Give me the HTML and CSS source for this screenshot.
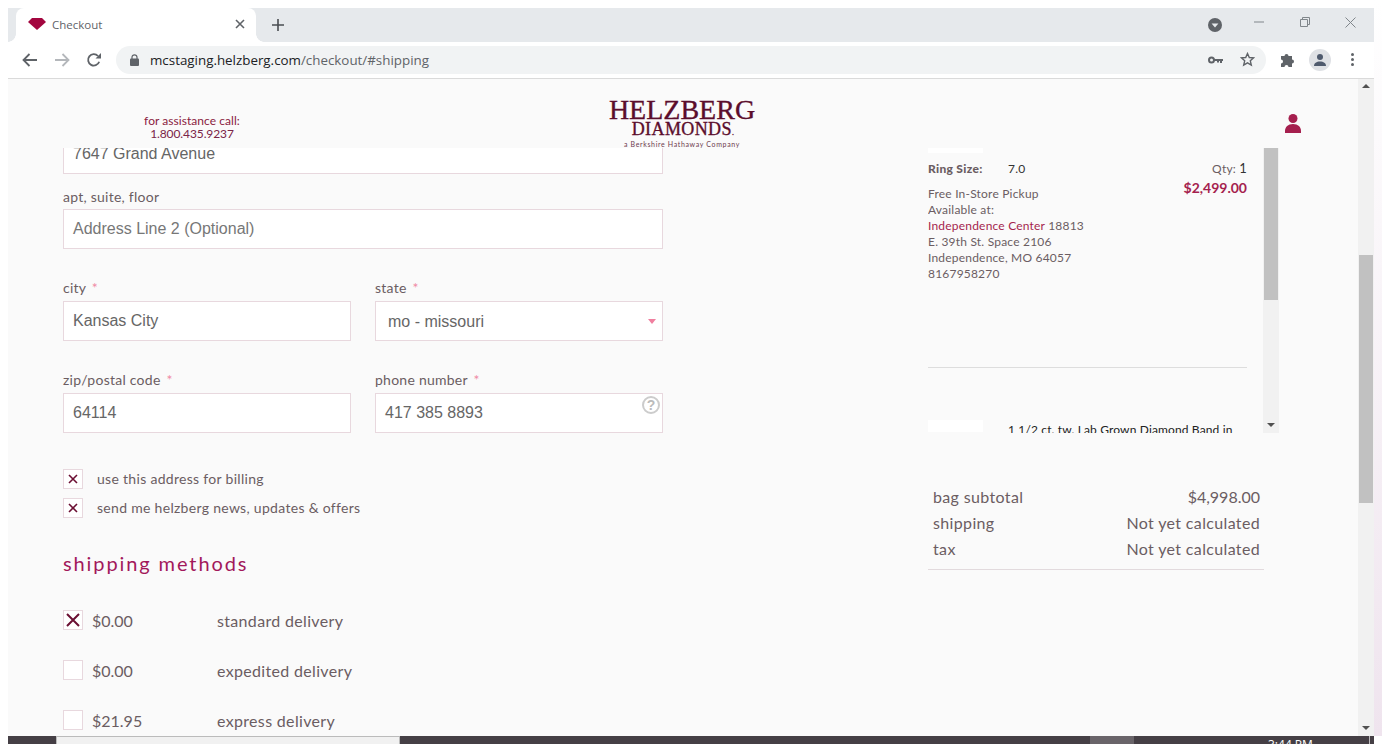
FILE: index.html
```html
<!DOCTYPE html>
<html lang="en">
<head>
  <meta charset="UTF-8">
  <title>Checkout</title>
  <link rel="stylesheet" href="styles.css">
</head>
<body>
  <div class="browser">
    <!-- Tab strip -->
    <div class="tabstrip">
      <div class="tab">
        <svg class="favicon" width="18" height="12" viewBox="0 0 18 12"><path d="M4 0h10l4 4-9 8-9-8z" fill="#a3063f"/></svg>
        <span class="tab-title">Checkout</span>
        <svg class="tab-close" width="10" height="10" viewBox="0 0 10 10"><path d="M1 1l8 8M9 1l-8 8" stroke="#5f6368" stroke-width="1.6"/></svg>
      </div>
      <svg class="new-tab" width="12" height="12" viewBox="0 0 12 12"><path d="M6 0v12M0 6h12" stroke="#4a4d51" stroke-width="1.6"/></svg>
      <div class="window-controls">
        <svg class="tab-search" width="14" height="14" viewBox="0 0 14 14"><circle cx="7" cy="7" r="7" fill="#5f6368"/><path d="M3.6 5.4h6.8L7 9.4z" fill="#e6e9ec"/></svg>
        <svg class="win-min" width="10" height="10" viewBox="0 0 10 10"><path d="M0 5h10" stroke="#80868b"/></svg>
        <svg class="win-restore" width="10" height="10" viewBox="0 0 10 10"><path d="M.5 2.5h7v7h-7zM2.5 2.5v-2h7v7h-2" fill="none" stroke="#80868b"/></svg>
        <svg class="win-close" width="11" height="11" viewBox="0 0 11 11"><path d="M.5.5l10 10M10.500.5l-10 10" stroke="#80868b"/></svg>
      </div>
    </div>

    <!-- Toolbar -->
    <div class="toolbar">
      <svg class="nav-icon" width="16" height="14" viewBox="0 0 16 14"><path d="M15 7H2M7.500 1L1.500 7l6 6" fill="none" stroke="#5f6368" stroke-width="1.8"/></svg>
      <svg class="nav-icon" width="16" height="14" viewBox="0 0 16 14"><path d="M1 7h13M8.500 1l6 6-6 6" fill="none" stroke="#b4b7bb" stroke-width="1.8"/></svg>
      <svg class="nav-icon" width="16" height="16" viewBox="0 0 16 16"><path d="M13.200 9.800A5.700 5.700 0 1 1 12 4" fill="none" stroke="#5f6368" stroke-width="1.800"/><path d="M9.500 6.500h5.500V1z" fill="#5f6368"/></svg>
      <div class="omnibox">
        <svg class="lock" width="9" height="12" viewBox="0 0 9 12"><path d="M2 5V3.300a2.500 2.500 0 0 1 5 0V5" fill="none" stroke="#5f6368" stroke-width="1.200"/><rect y="4.500" width="9" height="7.500" rx="1" fill="#5f6368"/></svg>
        <span class="url"><b>mcstaging.helzberg.com</b>/checkout/#shipping</span>
        <svg class="key" width="15" height="8" viewBox="0 0 15 8"><circle cx="3.500" cy="4" r="2.500" fill="none" stroke="#5f6368" stroke-width="2"/><path d="M6 3h9v2h-1v2h-2V5h-1v1.500H9V5H6z" fill="#5f6368"/></svg>
        <svg class="star" width="15" height="15" viewBox="0 0 15 15"><path d="M7.500 1.500l1.800 4 4.300.4-3.300 2.900 1 4.300-3.800-2.300-3.800 2.300 1-4.300L1.400 5.900l4.300-.4z" fill="none" stroke="#5f6368" stroke-width="1.400"/></svg>
      </div>
      <svg class="puzzle" width="15" height="15" viewBox="0 0 15 15"><path d="M0 4h3.500a2 2 0 1 1 4 0H11v3.500a2 2 0 1 1 0 4V15H7.500a2 2 0 1 0-4 0H0v-3.500a2 2 0 1 0 0-4z" fill="#5f6368"/></svg>
      <div class="avatar">
        <svg width="12" height="12" viewBox="0 0 12 12"><circle cx="6" cy="3" r="3" fill="#4f5a6d"/><path d="M0 12c0-3 2.500-4.500 6-4.500s6 1.500 6 4.500z" fill="#4f5a6d"/></svg>
      </div>
      <div class="kebab"><i></i><i></i><i></i></div>
    </div>

    <!-- Page -->
    <div class="viewport">
      <div class="page">
        <header class="site-header">
          <div class="assist">for assistance call:<br><span>1.800.435.9237</span></div>
          <div class="logo">
            <div class="logo-main">HELZBERG</div>
            <div class="logo-sub">DIAMONDS<small>.</small></div>
            <div class="logo-tag">a Berkshire Hathaway Company</div>
          </div>
          <div class="account">
            <svg width="16" height="19" viewBox="0 0 16 19"><circle cx="8" cy="4.500" r="4.500" fill="#a51f4e"/><path d="M0 19v-2c0-4 3-7 8-7s8 3 8 7v2z" fill="#a51f4e"/></svg>
          </div>
        </header>

        <main class="checkout">
          <section class="form-col">
            <div class="input first-input">7647 Grand Avenue</div>

            <label class="field-label apt-label">apt, suite, floor</label>
            <div class="input placeholder">Address Line 2 (Optional)</div>

            <div class="field-row">
              <div class="field">
                <label class="field-label">city <em>*</em></label>
                <div class="input">Kansas City</div>
              </div>
              <div class="field">
                <label class="field-label">state <em>*</em></label>
                <div class="input select">mo - missouri</div>
              </div>
            </div>

            <div class="field-row">
              <div class="field">
                <label class="field-label">zip/postal code <em>*</em></label>
                <div class="input">64114</div>
              </div>
              <div class="field">
                <label class="field-label">phone number <em>*</em></label>
                <div class="input phone">417 385 8893<span class="help">?</span></div>
              </div>
            </div>

            <div class="options">
              <div class="option">
                <span class="box"><svg width="10" height="10" viewBox="0 0 10 10"><path d="M1 1l8 8M9 1l-8 8" stroke="#6b0f33" stroke-width="1.600"/></svg></span>
                use this address for billing
              </div>
              <div class="option">
                <span class="box"><svg width="10" height="10" viewBox="0 0 10 10"><path d="M1 1l8 8M9 1l-8 8" stroke="#6b0f33" stroke-width="1.600"/></svg></span>
                send me helzberg news, updates &amp; offers
              </div>
            </div>

            <h2 class="section-title">shipping methods</h2>

            <div class="methods">
              <div class="method">
                <span class="box"><svg width="14" height="14" viewBox="0 0 14 14"><path d="M1 1l12 12M13 1L1 13" stroke="#6b0f33" stroke-width="2"/></svg></span>
                <span class="method-price">$0.00</span>
                <span>standard delivery</span>
              </div>
              <div class="method">
                <span class="box"></span>
                <span class="method-price">$0.00</span>
                <span>expedited delivery</span>
              </div>
              <div class="method">
                <span class="box"></span>
                <span class="method-price">$21.95</span>
                <span>express delivery</span>
              </div>
            </div>
          </section>

          <aside class="summary-col">
            <div class="cart">
              <div class="cart-items">
                <div class="thumb thumb-top"></div>
                <div class="item">
                  <div class="item-info">
                    <div class="ring-size"><b>Ring Size:</b><span>7.0</span></div>
                    <div class="pickup">
                      Free In-Store Pickup<br>
                      Available at:<br>
                      <a>Independence Center</a> 18813<br>
                      E. 39th St. Space 2106<br>
                      Independence, MO 64057<br>
                      8167958270
                    </div>
                  </div>
                  <div class="item-price">
                    <div class="qty">Qty: <span>1</span></div>
                    <div class="price">$2,499.00</div>
                  </div>
                </div>
                <div class="next-item">
                  <div class="thumb"></div>
                  <div class="next-name">1 1/2 ct. tw. Lab Grown Diamond Band in</div>
                </div>
              </div>
              <div class="scrollbar cart-scrollbar">
                <div class="scroll-thumb"></div>
                <span class="arrow-down"></span>
              </div>
            </div>

            <dl class="totals">
              <div><dt>bag subtotal</dt><dd>$4,998.00</dd></div>
              <div><dt>shipping</dt><dd>Not yet calculated</dd></div>
              <div><dt>tax</dt><dd>Not yet calculated</dd></div>
            </dl>
          </aside>
        </main>
      </div>

      <div class="scrollbar page-scrollbar">
        <span class="arrow-up"></span>
        <div class="scroll-thumb"></div>
        <span class="arrow-down"></span>
      </div>
    </div>
  </div>

  <!-- Desktop taskbar, mostly cut off -->
  <div class="taskbar">
    <div class="task-window"></div>
    <div class="task-app"></div>
    <div class="task-clock">3:44 PM</div>
    <div class="task-line"></div>
  </div>
</body>
</html>
```

FILE: styles.css
```css
* {
  box-sizing: border-box;
}
html, body {
  margin: 0;
  height: 744px;
  overflow: hidden;
}
body {
  padding: 8px 8px 0;
  background: #fff linear-gradient(to bottom, #fff, #efe4ee) no-repeat right top / 8px 736px;
  font-family: Lato, sans-serif;
  color: #6b5d62;
}
.browser {
  display: flex;
  flex-direction: column;
  height: 728px;
  background: #fff;
}

/* tab strip */
.tabstrip {
  display: flex;
  align-items: center;
  height: 34px;
  background: #e6e9ec;
  flex: none;
}
.tab {
  position: relative;
  display: flex;
  align-items: center;
  width: 240px;
  height: 34px;
  margin-left: 8px;
  padding: 0 11px 2px 12px;
  background: #fff;
  border-radius: 8px 8px 0 0;
}
.tab::before, .tab::after {
  content: "";
  position: absolute;
  bottom: 0;
  width: 8px;
  height: 8px;
}
.tab::before {
  left: -8px;
  background: radial-gradient(circle at 0 0, #e6e9ec 7.5px, #fff 8px);
}
.tab::after {
  right: -8px;
  background: radial-gradient(circle at 100% 0, #e6e9ec 7.5px, #fff 8px);
}
.tab-title {
  flex: 1;
  margin-left: 6px;
  font: 11.5px "Open Sans", sans-serif;
  color: #5f6368;
}
.new-tab {
  margin-left: 16px;
}
.window-controls {
  display: flex;
  align-items: center;
  margin-left: auto;
  padding-right: 18px;
}
.win-min {
  margin-left: 32px;
  margin-top: -6px;
}
.win-restore {
  margin-left: 36px;
  margin-top: -6px;
}
.win-close {
  margin-left: 35px;
  margin-top: -6px;
}

/* toolbar */
.toolbar {
  display: flex;
  align-items: center;
  height: 37px;
  padding: 0 0 1px 14px;
  border-bottom: 1px solid #dadada;
  flex: none;
}
.nav-icon {
  margin-right: 16px;
}
.omnibox {
  display: flex;
  align-items: center;
  width: 1150px;
  height: 28px;
  margin-left: -2px;
  padding: 0 11px 0 14px;
  background: #f1f3f4;
  border-radius: 14px;
}
.url {
  flex: 1;
  margin-left: 11px;
  font: 13.36px "Open Sans", sans-serif;
  color: #5f6368;
}
.url b {
  font-weight: 400;
  color: #202124;
}
.star {
  margin-left: 17px;
}
.puzzle {
  margin-left: 15px;
}
.avatar {
  display: flex;
  align-items: center;
  justify-content: center;
  width: 22px;
  height: 22px;
  margin-left: 13px;
  background: #dfe1e5;
  border-radius: 50%;
}
.kebab {
  display: flex;
  flex-direction: column;
  gap: 2px;
  margin-left: 20px;
}
.kebab i {
  width: 3px;
  height: 3px;
  background: #5f6368;
  border-radius: 50%;
}

/* page */
.viewport {
  display: flex;
  flex: 1;
  min-height: 0;
}
.page {
  flex: 1;
  min-width: 0;
  background: #fafafa;
  overflow: hidden;
}
.site-header {
  position: relative;
  z-index: 2;
  display: grid;
  grid-template-columns: 368px 612px 1fr;
  height: 69px;
  background: #fafafa;
}
.assist {
  padding-top: 35px;
  text-align: center;
  font-size: 12px;
  line-height: 13px;
  letter-spacing: .05px;
  color: #8a1c3f;
}
.assist span {
  color: #7a2448;
  letter-spacing: -.1px;
}
.logo {
  padding-top: 19px;
  text-align: center;
  color: #5b0d2c;
  font-family: "Liberation Serif", serif;
  -webkit-text-stroke: .35px #5b0d2c;
}
.logo-main {
  font-size: 28px;
  line-height: 24px;
}
.logo-sub {
  margin-left: 2px;
  font-size: 18px;
  line-height: 15px;
  letter-spacing: .4px;
}
.logo-sub small {
  font-size: 8px;
}
.logo-tag {
  font: 400 7px/9px Lato, sans-serif;
  letter-spacing: .65px;
  color: #6e3a4e;
  -webkit-text-stroke: 0;
}
.account {
  display: flex;
  justify-content: flex-end;
  padding: 35px 57px 0 0;
}
.account svg {
  display: block;
}

.checkout {
  display: grid;
  grid-template-columns: 600px 351px;
  column-gap: 265px;
  height: 588px;
  padding-left: 55px;
  overflow: hidden;
}

/* form */
.form-col {
  margin-top: -14px;
}
.input {
  position: relative;
  height: 40px;
  padding-left: 9px;
  background: #fff;
  border: 1px solid #e8d8de;
  font: 16px/38px "Liberation Sans", sans-serif;
  color: #666;
}
.placeholder {
  color: #777;
}
.first-input {
  line-height: 37px;
}
.field-label {
  display: block;
  margin-bottom: 4px;
  font-size: 14px;
  line-height: 17px;
  letter-spacing: .25px;
}
.field-label em {
  margin-left: 2px;
  font-style: normal;
  color: #f08aa5;
}
.apt-label {
  margin-top: 14px;
}
.field-row {
  display: grid;
  grid-template-columns: 288px 288px;
  column-gap: 24px;
  margin-top: 30px;
}
.field .field-label {
  margin-bottom: 5px;
}
.select {
  padding-left: 12px;
  line-height: 39px;
}
.select::after {
  content: "";
  position: absolute;
  top: 17px;
  right: 6px;
  border: 4px solid transparent;
  border-top: 5px solid #f07f9f;
  border-bottom: 0;
}
.help {
  position: absolute;
  top: 2px;
  right: 2px;
  width: 18px;
  height: 18px;
  border: 2px solid #ccc;
  border-radius: 50%;
  font: bold 14px/14px "Liberation Sans", sans-serif;
  text-align: center;
  color: #bbb;
}
.box {
  display: flex;
  align-items: center;
  justify-content: center;
  width: 20px;
  height: 20px;
  background: #fff;
  border: 1px solid #e8d8de;
  flex: none;
}
.options {
  display: flex;
  flex-direction: column;
  gap: 9px;
  margin-top: 36px;
}
.option {
  display: flex;
  align-items: center;
  gap: 14px;
  font-size: 14px;
  line-height: 18px;
  letter-spacing: .3px;
}
.section-title {
  margin: 30px 0 0;
  font-size: 20px;
  font-weight: 400;
  line-height: 30px;
  letter-spacing: 1.9px;
  color: #a2185b;
}
.methods {
  display: flex;
  flex-direction: column;
  gap: 30px;
  margin-top: 32px;
}
.method {
  display: flex;
  align-items: center;
  font-size: 16px;
  letter-spacing: .33px;
}
.method-price {
  width: 125px;
  margin-left: 9px;
  letter-spacing: 0;
}

/* right column */
.cart {
  display: flex;
  height: 285px;
}
.cart-items {
  width: 336px;
  padding-right: 16px;
  overflow: hidden;
}
.thumb {
  width: 55px;
  height: 5px;
  background: #fff;
  flex: none;
}
.item {
  display: flex;
  justify-content: space-between;
  height: 215px;
  padding-top: 8px;
  border-bottom: 1px solid #ddd;
  font-size: 12px;
  letter-spacing: .2px;
}
.ring-size {
  display: flex;
  height: 17px;
  line-height: 15px;
}
.ring-size b {
  width: 80px;
  font-weight: 900;
  letter-spacing: .3px;
}
.ring-size span {
  color: #333;
}
.pickup {
  margin-top: 8px;
  line-height: 16px;
}
.pickup a {
  color: #a51f4e;
}
.item-price {
  text-align: right;
}
.qty {
  line-height: 15px;
}
.qty span {
  font-size: 13px;
  color: #333;
}
.price {
  margin-top: 3px;
  font-size: 14px;
  font-weight: 700;
  line-height: 17px;
  letter-spacing: 0;
  color: #a51f4e;
}
.next-item {
  display: flex;
  margin-top: 52px;
}
.next-item .thumb {
  height: 12px;
}
.next-name {
  margin: 3px 0 0 25px;
  font: 12px/14px Lato, sans-serif;
  letter-spacing: .14px;
  color: #222;
  white-space: nowrap;
}
.totals {
  margin: 51px 0 0;
  width: 336px;
  padding: 0 4px 7px 5px;
  border-bottom: 1px solid #e2dadd;
  font-size: 16px;
  line-height: 26px;
  letter-spacing: .35px;
}
.totals div {
  display: flex;
  justify-content: space-between;
}
.totals dd {
  margin: 0;
}
.totals div:first-child dd {
  letter-spacing: 0;
}

/* scrollbars */
.scrollbar {
  position: relative;
  width: 16px;
  background: #f1f1f1;
  flex: none;
}
.scroll-thumb {
  position: absolute;
  left: 1px;
  width: 14px;
  background: #c1c1c1;
}
.cart-scrollbar .scroll-thumb {
  top: 0;
  height: 152px;
}
.page-scrollbar .scroll-thumb {
  top: 176px;
  height: 248px;
}
.arrow-up, .arrow-down {
  position: absolute;
  left: 4px;
  border: 4px solid transparent;
}
.arrow-up {
  top: 5px;
  border-top: 0;
  border-bottom: 4px solid #505050;
}
.arrow-down {
  bottom: 6px;
  border-bottom: 0;
  border-top: 4px solid #505050;
}

/* taskbar */
.taskbar {
  position: relative;
  display: flex;
  height: 8px;
  padding-left: 48px;
  background: #453f45;
  color: #fff;
}
.task-window {
  width: 344px;
  background: #f1f1f1;
  border-top: 1px solid #bbb;
  border-left: 1px solid #bbb;
  border-right: 1px solid #bbb;
}
.task-app {
  width: 44px;
  margin-left: 690px;
  background: #696469;
}
.task-clock {
  margin: 1px 0 0 134px;
  width: 60px;
  font: 12px/16px "Open Sans", sans-serif;
}
.task-line {
  width: 1px;
  margin-left: 41px;
  background: #bdbabd;
}
```
